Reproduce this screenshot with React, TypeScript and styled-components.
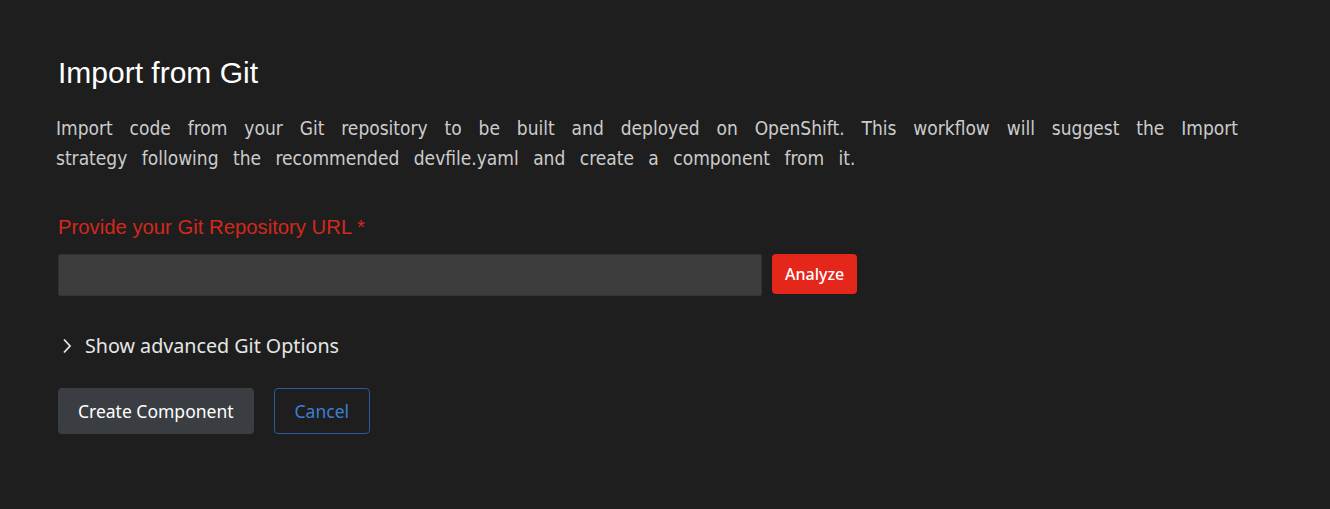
import React from "react";
import styled, { createGlobalStyle } from "styled-components";

const Global = createGlobalStyle`
  html, body { margin: 0; padding: 0; background: #1e1e1e; }
  body { font-family: "Liberation Sans", Arial, sans-serif; }
`;

const Page = styled.div`
  padding: 53px 92px 60px 58px;
  display: flex;
  flex-direction: column;
`;

const Title = styled.h1`
  margin: 0;
  font-family: "Liberation Sans", Arial, sans-serif;
  font-weight: 400;
  font-size: 30px;
  line-height: 40px;
  color: #ffffff;
`;

const Description = styled.p`
  margin: 20px 0 0 -2px;
  font-family: "Liberation Sans Narrow", "Arial Narrow", "DejaVu Sans Condensed", sans-serif;
  font-size: 19px;
  line-height: 30px;
  word-spacing: 9px;
  color: #cccccc;
  text-align: justify;
`;

const Label = styled.label`
  margin-top: 42px;
  font-size: 20.3px;
  line-height: 24px;
  color: #d4281c;
`;

const InputRow = styled.div`
  margin-top: 15px;
  display: flex;
  align-items: flex-start;
  gap: 10px;
`;

const UrlInput = styled.input`
  box-sizing: border-box;
  width: 704px;
  height: 42px;
  background: #3c3c3c;
  border: 1px solid #333333;
  border-radius: 2px;
  color: #cccccc;
  font-size: 16px;
  padding: 0 10px;
  outline: none;
`;

const BaseButton = styled.button`
  box-sizing: border-box;
  font-family: "Noto Sans", "Open Sans", sans-serif;
  cursor: pointer;
  border-radius: 4px;
`;

const AnalyzeButton = styled(BaseButton)`
  height: 40px;
  padding: 0 13px;
  background: #e5261b;
  border: none;
  color: #ffffff;
  font-size: 16px;
  font-weight: 500;
`;

const Advanced = styled.div`
  margin-top: 37px;
  display: flex;
  align-items: center;
  gap: 13px;
  font-family: "Noto Sans", "Open Sans", sans-serif;
  font-size: 19.7px;
  line-height: 26px;
  color: #e6e6e6;
  padding-left: 4px;
`;

const Chevron = styled.svg`
  flex: none;
`;

const Actions = styled.div`
  margin-top: 29px;
  display: flex;
  gap: 20px;
`;

const PrimaryButton = styled(BaseButton)`
  height: 46px;
  padding: 0 20px;
  background: #3a3d41;
  border: none;
  color: #ffffff;
  font-size: 17.5px;
  font-weight: 400;
`;

const OutlineButton = styled(BaseButton)`
  height: 46px;
  padding: 0 20px;
  background: transparent;
  border: 1px solid #2a5a9e;
  color: #3d7fd4;
  font-size: 17.5px;
`;

export default function App() {
  return (
    <>
      <Global />
      <Page>
        <Title>Import from Git</Title>
        <Description>
          Import code from your Git repository to be built and deployed on OpenShift. This workflow will
          suggest the Import strategy following the recommended devfile.yaml and create a component from it.
        </Description>
        <Label>Provide your Git Repository URL *</Label>
        <InputRow>
          <UrlInput type="text" />
          <AnalyzeButton>Analyze</AnalyzeButton>
        </InputRow>
        <Advanced>
          <Chevron width="10" height="16" viewBox="0 0 10 16" fill="none">
            <path d="M2 1.5 L8 8 L2 14.5" stroke="#e6e6e6" strokeWidth="1.8" />
          </Chevron>
          Show advanced Git Options
        </Advanced>
        <Actions>
          <PrimaryButton>Create Component</PrimaryButton>
          <OutlineButton>Cancel</OutlineButton>
        </Actions>
      </Page>
    </>
  );
}
